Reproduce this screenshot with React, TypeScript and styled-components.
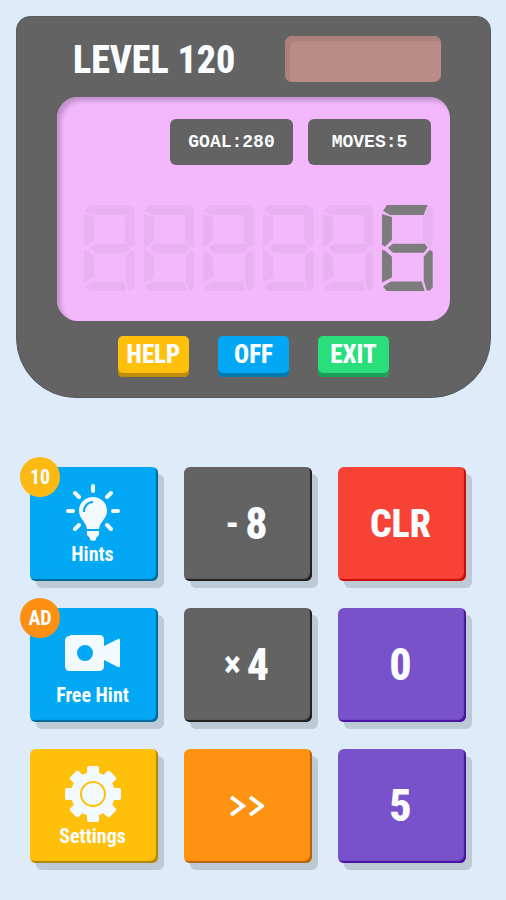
import React from "react";
import styled, { createGlobalStyle } from "styled-components";

const GlobalStyle = createGlobalStyle`
  *, *::before, *::after { box-sizing: border-box; }
  body {
    margin: 0;
    background: #deebf9;
    font-family: "Roboto Condensed", "Liberation Sans Narrow", Roboto, sans-serif;
    font-weight: 700;
    color: #fafdff;
  }
  button { font: inherit; color: inherit; border: 0; padding: 0; cursor: pointer; }
`;

const Page = styled.main`
  min-height: 100vh;
  padding: 16px 15px 16px 16px;
`;

const Calculator = styled.section`
  background: #636363;
  border: 1px solid #555a5e;
  border-radius: 14px 14px 60px 60px;
  padding: 19px 40px 20px;
`;

const Header = styled.header`
  display: flex;
  align-items: flex-start;
  justify-content: space-between;
  padding: 0 9px 0 16px;
  margin-bottom: 13px;
`;

const Title = styled.h1`
  margin: 0;
  font-size: 38px;
  line-height: 48px;
  font-weight: 800;
  white-space: nowrap;
`;

const SolarPanel = styled.div`
  flex: 0 0 156px;
  height: 46px;
  border-radius: 7px;
  background: #b98c86;
  box-shadow: inset 5px 5px 1px #ab817c;
`;

const Screen = styled.div`
  background: #f3b8fc;
  border-radius: 21px;
  box-shadow: inset 4px 4px 4px #c392cd;
  padding: 22px 17px 30px 27px;
`;

const Tags = styled.div`
  display: flex;
  justify-content: flex-end;
  gap: 15px;
  margin-bottom: 40px;
  padding-right: 2px;
`;

const Tag = styled.div`
  width: 123px;
  height: 46px;
  border-radius: 6px;
  background: #636363;
  display: flex;
  align-items: center;
  justify-content: center;
  font: 700 18px "Liberation Mono", monospace;
`;

const Digits = styled.div`
  display: flex;
  gap: 9px;
`;

const DigitSvg = styled.svg`
  display: block;
  flex: 1;
  min-width: 0;
`;

const Segment = styled.polygon<{ $lit: boolean }>`
  fill: ${(p) => (p.$lit ? "#7b7c7b" : "#e9b1f2")};
`;

const SmallButtons = styled.div`
  display: flex;
  justify-content: center;
  gap: 29px;
  margin-top: 15px;
`;

const SmallButton = styled.button<{ $face: string; $edge: string }>`
  width: 71px;
  height: 41px;
  padding-bottom: 3px;
  border-radius: 5px;
  font-size: 25px;
  font-weight: 800;
  line-height: 38px;
  background: ${(p) => p.$face};
  box-shadow: inset 0 -4px 0 ${(p) => p.$edge};
`;

const Keypad = styled.section`
  display: grid;
  grid-template-columns: repeat(3, 1fr);
  gap: 27px 26px;
  padding: 69px 25px 16px 14px;
`;

const Key = styled.button<{ $face: string; $edge: string }>`
  position: relative;
  height: 114px;
  padding-right: 3px;
  border-radius: 6px;
  background: ${(p) => p.$face};
  box-shadow: inset -2px -2px 1px ${(p) => p.$edge}, 6px 7px 0 #bccad6;
  display: flex;
  flex-direction: column;
  align-items: center;
  justify-content: center;
`;

const KeyValue = styled.span<{ $size?: number }>`
  display: flex;
  align-items: center;
  gap: 6px;
  font-size: ${(p) => p.$size ?? 44}px;
  font-weight: 800;
  line-height: 48px;
`;

const KeyLabel = styled.span`
  font-size: 20px;
  line-height: 24px;
`;

const Badge = styled.span<{ $color: string }>`
  position: absolute;
  left: -10px;
  top: -10px;
  width: 40px;
  height: 40px;
  border-radius: 50%;
  background: ${(p) => p.$color};
  font-size: 20px;
  line-height: 40px;
  text-align: center;
`;

const Icon = styled.svg`
  display: block;
  width: 56px;
  height: 60px;
`;

const SEGMENTS: Record<string, string> = {
  a: "1,6 5,0 46,0 42,10 8,10",
  b: "45,2 48,1 51,5 51,40 48,43 41,36 41,13",
  c: "42,52 48,45 51,47 51,83 48,86 45,86 42,76",
  d: "1,82 9,77 40,77 43,87 5,87",
  e: "0,45 3,46 10,52 10,73 0,78",
  f: "0,9 10,12 10,35 3,42 0,40",
  g: "6,43 11,39 43,39 46,43 42,48 11,48",
};

const LIT: Record<string, string> = { " ": "", "6": "acdefg" };

function Digit({ value }: { value: string }) {
  return (
    <DigitSvg viewBox="0 0 51 87" role="img" aria-label={value.trim() || "blank"}>
      {Object.entries(SEGMENTS).map(([name, points]) => (
        <Segment key={name} points={points} $lit={LIT[value].includes(name)} />
      ))}
    </DigitSvg>
  );
}

function BulbIcon() {
  return (
    <Icon viewBox="0 0 56 60" fill="none" aria-hidden="true">
      <g stroke="#f3faff" strokeWidth="4" strokeLinecap="round">
        <path d="M28 4v5M10 11l4 4M46 11l-4 4M3 29h5M48 29h5M10 47l4-4M46 47l-4-4" />
      </g>
      <path fill="#f3faff" d="M28 15c-8 0-14 6-14 14 0 8 7 10 8 18h12c1-8 8-10 8-18 0-8-6-14-14-14zM22 49h12v4l-3 3v2l-3 1-3-1v-2l-3-3z" />
      <path stroke="#03a4ef" strokeWidth="2" d="M19 30c0-6 4-10 9-10" />
    </Icon>
  );
}

function CameraIcon() {
  return (
    <Icon viewBox="0 0 56 60" aria-hidden="true">
      <path fill="#f3faff" fillRule="evenodd" d="M5 12h29q5 0 5 5v6l14-7q2-1 2 1v26q0 2-2 1l-14-7v6q0 5-5 5h-29q-5 0-5-5v-25q0-5 5-5zM20 22a8 8 0 1 0 0 16a8 8 0 1 0 0-16z" />
    </Icon>
  );
}

function GearIcon() {
  return (
    <Icon viewBox="0 0 56 60" aria-hidden="true">
      <g fill="#f3faff">
        <circle cx="28" cy="30" r="22" />
        {[0, 45, 90, 135].map((angle) => (
          <rect key={angle} x="22" y="2" width="12" height="56" rx="2" transform={`rotate(${angle} 28 30)`} />
        ))}
      </g>
      <circle cx="28" cy="30" r="12" fill="none" stroke="#fec00a" strokeWidth="2" />
    </Icon>
  );
}

const ChevronSvg = styled.svg`
  display: block;
  width: 34px;
  height: 22px;
`;

const BLUE = { $face: "#03a8f5", $edge: "#02689a" };
const GRAY = { $face: "#636363", $edge: "#1f1f1f" };
const PURPLE = { $face: "#7952cb", $edge: "#4a12a0" };

const Sign = styled.span`
  font-size: 36px;
  line-height: 48px;
`;

export default function App() {
  return (
    <>
      <GlobalStyle />
      <Page>
        <Calculator>
          <Header>
            <Title>LEVEL 120</Title>
            <SolarPanel />
          </Header>
          <Screen>
            <Tags>
              <Tag>GOAL:280</Tag>
              <Tag>MOVES:5</Tag>
            </Tags>
            <Digits>
              {"     6".split("").map((value, index) => (
                <Digit key={index} value={value} />
              ))}
            </Digits>
          </Screen>
          <SmallButtons>
            <SmallButton $face="#fec00a" $edge="#bf8c08">HELP</SmallButton>
            <SmallButton $face="#03a8f5" $edge="#0277b0">OFF</SmallButton>
            <SmallButton $face="#29de7b" $edge="#1b9f56">EXIT</SmallButton>
          </SmallButtons>
        </Calculator>
        <Keypad>
          <Key {...BLUE}>
            <Badge $color="#fdb913">10</Badge>
            <BulbIcon />
            <KeyLabel>Hints</KeyLabel>
          </Key>
          <Key {...GRAY}>
            <KeyValue><Sign>-</Sign>8</KeyValue>
          </Key>
          <Key $face="#f74335" $edge="#c80b08">
            <KeyValue $size={38}>CLR</KeyValue>
          </Key>
          <Key {...BLUE}>
            <Badge $color="#fd8f12">AD</Badge>
            <CameraIcon />
            <KeyLabel>Free Hint</KeyLabel>
          </Key>
          <Key {...GRAY}>
            <KeyValue><Sign>×</Sign>4</KeyValue>
          </Key>
          <Key {...PURPLE}>
            <KeyValue>0</KeyValue>
          </Key>
          <Key $face="#fec00a" $edge="#b08405">
            <GearIcon />
            <KeyLabel>Settings</KeyLabel>
          </Key>
          <Key $face="#ff9211" $edge="#b5640a" aria-label="Next">
            <ChevronSvg viewBox="0 0 34 22" fill="none" stroke="#fafdff" strokeWidth="4" aria-hidden="true">
              <path d="M1 2l12 9-12 9M20 2l12 9-12 9" />
            </ChevronSvg>
          </Key>
          <Key {...PURPLE}>
            <KeyValue>5</KeyValue>
          </Key>
        </Keypad>
      </Page>
    </>
  );
}
